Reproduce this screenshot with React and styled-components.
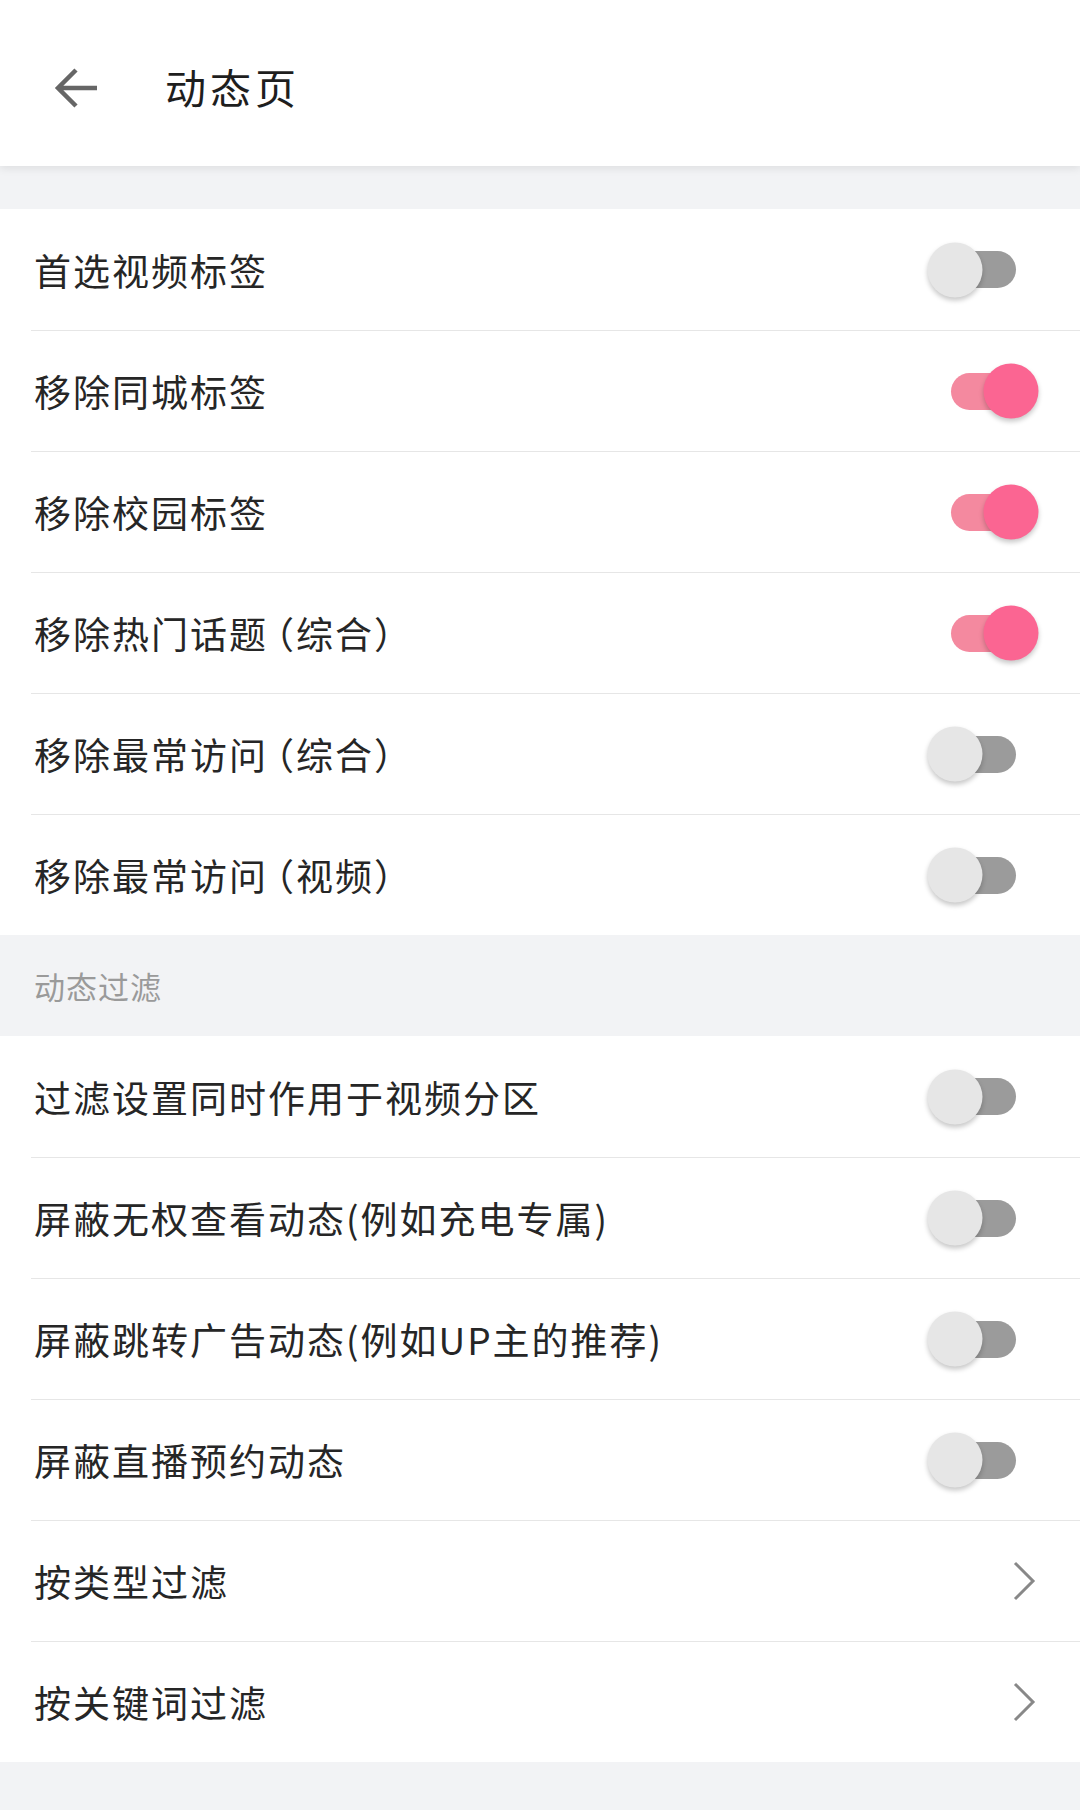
import React from "react";
import styled, { createGlobalStyle } from "styled-components";

const GlobalStyle = createGlobalStyle`
  html, body {
    margin: 0;
    padding: 0;
    background: #f2f3f5;
    font-family: "Noto Sans CJK SC", "Noto Sans", sans-serif;
  }
`;

const Page = styled.div`
  width: 1080px;
  min-height: 1810px;
  background: #f2f3f5;
  display: flex;
  flex-direction: column;
`;

const Header = styled.header`
  height: 166px;
  background: #fff;
  display: flex;
  align-items: center;
  padding-left: 53px;
  gap: 66px;
  box-shadow: 0 3px 8px rgba(0, 0, 0, 0.08);
  position: relative;
  z-index: 1;
`;

const BackButton = styled.div`
  width: 46px;
  height: 46px;
  display: flex;
  align-items: center;
  justify-content: center;
  margin-top: 10px;
`;

const Title = styled.h1`
  margin: 0;
  margin-top: 6px;
  font-size: 41px;
  font-weight: 400;
  color: #1e1e1e;
  letter-spacing: 4px;
`;

const Group = styled.section`
  background: #fff;
  margin-top: ${(p) => p.$top || 0}px;
`;

const Row = styled.div`
  height: 121px;
  margin-left: 31px;
  padding-right: 44px;
  display: flex;
  align-items: center;
  justify-content: space-between;
  border-top: ${(p) => (p.$first ? "none" : "1.5px solid #e6e6e6")};
  box-sizing: border-box;
`;

const Label = styled.span`
  font-size: 37px;
  color: #262626;
  letter-spacing: 2px;
  padding-left: 3px;
`;

const Paren = styled.span`
  margin-left: -11px;
`;

const SectionTitle = styled.div`
  height: 101px;
  display: flex;
  align-items: center;
  padding-left: 34px;
  font-size: 31px;
  color: #9a9a9a;
  letter-spacing: 1px;
`;

const Track = styled.div`
  width: 65px;
  height: 37px;
  border-radius: 19px;
  background: ${(p) => (p.$on ? "#f4899f" : "#9b9b9b")};
  position: relative;
  margin-right: 20px;
`;

const Thumb = styled.div`
  position: absolute;
  top: 50%;
  left: ${(p) => (p.$on ? "60px" : "4px")};
  width: 55px;
  height: 55px;
  border-radius: 50%;
  transform: translate(-50%, -50%);
  background: ${(p) => (p.$on ? "#fb6592" : "#e6e6e6")};
  box-shadow: 0 3px 5px rgba(0, 0, 0, 0.22);
`;

const Chevron = styled.svg`
  width: 24px;
  height: 40px;
`;

const Bottom = styled.div`
  flex: 1;
  background: #f2f3f5;
`;

function Switch({ on }) {
  return (
    <Track $on={on}>
      <Thumb $on={on} />
    </Track>
  );
}

// full-width brackets sit closer to the word before them, as in the app
function LabelText({ text }) {
  const m = text.match(/^(.*)（(.*)）$/);
  if (!m) return <Label>{text}</Label>;
  return (
    <Label>
      {m[1]}
      <Paren>（</Paren>
      {m[2]}）
    </Label>
  );
}

const topItems = [
  ["首选视频标签", false],
  ["移除同城标签", true],
  ["移除校园标签", true],
  ["移除热门话题（综合）", true],
  ["移除最常访问（综合）", false],
  ["移除最常访问（视频）", false],
];

const filterItems = [
  ["过滤设置同时作用于视频分区", false],
  ["屏蔽无权查看动态(例如充电专属)", false],
  ["屏蔽跳转广告动态(例如UP主的推荐)", false],
  ["屏蔽直播预约动态", false],
];

const linkItems = ["按类型过滤", "按关键词过滤"];

export default function App() {
  return (
    <Page>
      <GlobalStyle />
      <Header>
        <BackButton>
          <svg width="46" height="46" viewBox="0 0 46 46" fill="none">
            <path
              d="M44 23H6M23 5L5 23l18 18"
              stroke="#666"
              strokeWidth="4.5"
            />
          </svg>
        </BackButton>
        <Title>动态页</Title>
      </Header>
      <Group $top={43}>
        {topItems.map(([label, on], i) => (
          <Row key={label} $first={i === 0}>
            <LabelText text={label} />
            <Switch on={on} />
          </Row>
        ))}
      </Group>
      <SectionTitle>动态过滤</SectionTitle>
      <Group>
        {filterItems.map(([label, on], i) => (
          <Row key={label} $first={i === 0}>
            <LabelText text={label} />
            <Switch on={on} />
          </Row>
        ))}
        {linkItems.map((label) => (
          <Row key={label}>
            <LabelText text={label} />
            <Chevron viewBox="0 0 24 40" fill="none">
              <path d="M3 2l18 18L3 38" stroke="#888" strokeWidth="3" />
            </Chevron>
          </Row>
        ))}
      </Group>
      <Bottom />
    </Page>
  );
}
